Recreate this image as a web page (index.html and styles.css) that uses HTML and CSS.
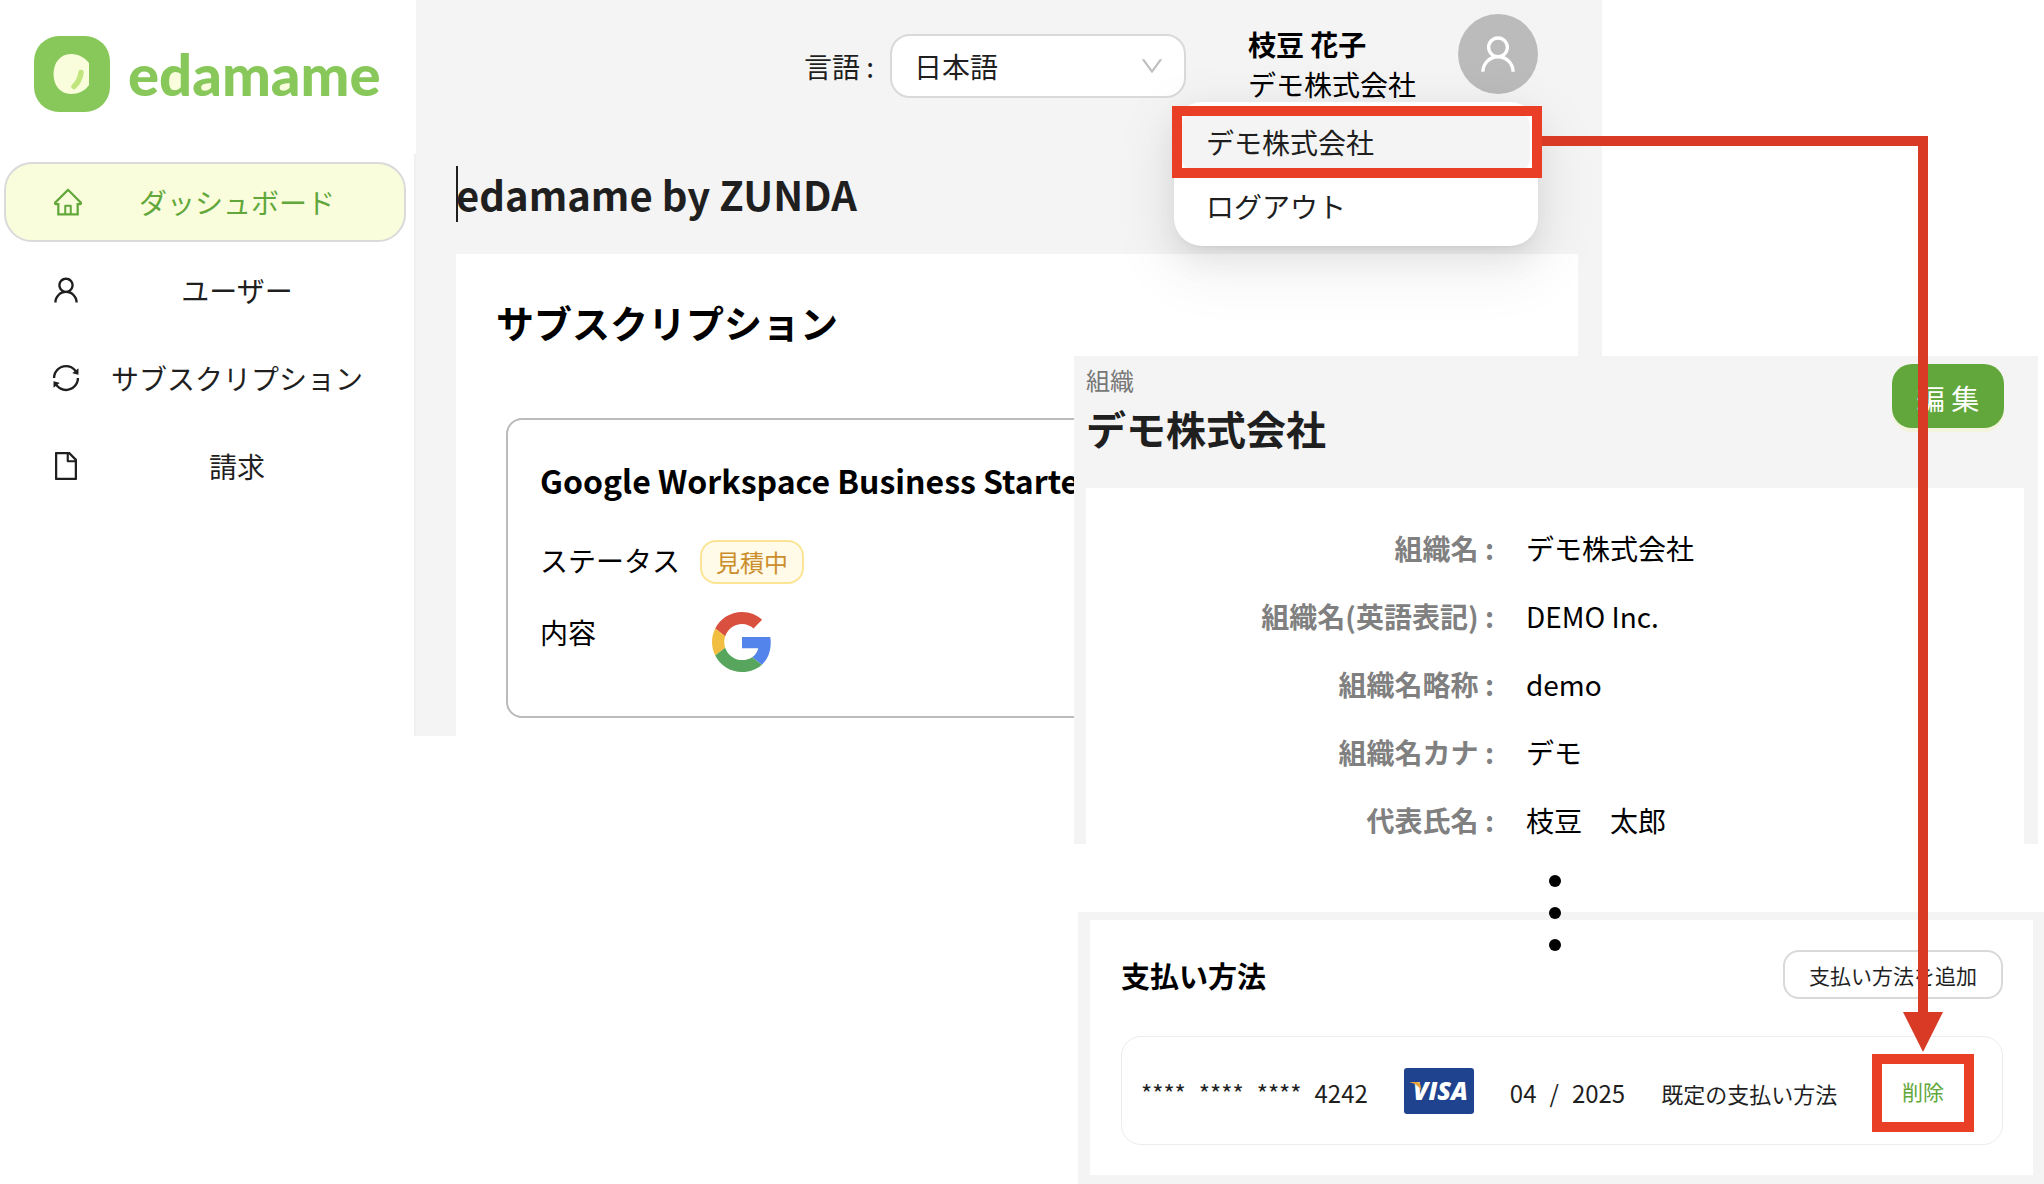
FILE: index.html
```html
<!DOCTYPE html>
<html lang="ja">

<head>
    <meta charset="UTF-8">
    <meta name="viewport" content="width=device-width, initial-scale=1.0">
    <title>edamame by ZUNDA</title>
    <link rel="stylesheet" href="styles.css">
</head>
<body>
    <div class="canvas">
        <!-- dashboard -->
        <div class="window dashboard">
            <aside class="sidebar">
                <a href="#" class="logo">
                    <svg class="logo-mark" viewBox="0 0 76 76" aria-hidden="true">
                        <rect width="76" height="76" rx="25" fill="#88c85b"/>
                        <path d="M37 18c-11 0-17.500 9-17.500 20S26 58 37 58c7 0 14-3 18-9V27c-4-5-10-9-18-9z" fill="#fafddc"/>
                        <path d="M47 36.500c-.8 6-3 10.500-7 14" fill="none" stroke="#bfe57c" stroke-width="5.500" stroke-linecap="round"/>
                    </svg>
                    <span class="logo-text">e<span class="bowl-d">d</span><span class="bowl-a">a</span>m<span class="bowl-a">a</span>me</span>
                </a>
                <nav class="nav">
                    <a href="#" class="nav-item active">
                        <svg class="icon" viewBox="64 64 896 896" aria-hidden="true"><path d="M946.5 505L560.1 118.8l-25.9-25.9a31.500 31.500 0 00-44.4 0L77.500 505a63.900 63.900 0 00-18.800 46c.4 35.200 29.700 63.300 64.900 63.300h42.500V940h691.800V614.300h43.400c17.100 0 33.200-6.700 45.300-18.800a63.600 63.600 0 0018.700-45.300c0-17-6.700-33.100-18.800-45.200zM568 868H456V664h112v204zm217.900-325.700V868H632V640c0-22.100-17.900-40-40-40H432c-22.100 0-40 17.900-40 40v228H238.100V542.300h-96l370-369.700 23.100 23.100L882 542.300h-96.100z"/></svg>
                        <span>ダッシュボード</span>
                    </a>
                    <a href="#" class="nav-item">
                        <svg class="icon" viewBox="64 64 896 896" aria-hidden="true"><path d="M858.5 763.6a374 374 0 00-80.6-119.5 375.63 375.63 0 00-119.5-80.6c-.4-.2-.8-.3-1.2-.5C719.5 518 760 444.7 760 362c0-137-111-248-248-248S264 225 264 362c0 82.7 40.5 156 102.8 201.1-.4.2-.8.3-1.2.5-44.8 18.9-85 46-119.5 80.6a375.63 375.63 0 00-80.6 119.5A371.7 371.7 0 00136 901.8a8 8 0 008 8.2h60c4.4 0 7.9-3.5 8-7.8 2-77.2 33-149.5 87.8-204.3 56.7-56.7 132-87.9 212.2-87.9s155.5 31.2 212.2 87.9C779 752.7 810 825 812 902.2c.1 4.4 3.6 7.8 8 7.8h60a8 8 0 008-8.2c-1-47.8-10.9-94.3-29.5-138.2zM512 534c-45.9 0-89.1-17.9-121.6-50.4S340 407.9 340 362c0-45.9 17.9-89.1 50.4-121.6S466.1 190 512 190s89.1 17.9 121.6 50.4S684 316.1 684 362c0 45.9-17.9 89.1-50.4 121.6S557.9 534 512 534z"/></svg>
                        <span>ユーザー</span>
                    </a>
                    <a href="#" class="nav-item">
                        <svg class="icon" viewBox="64 64 896 896" aria-hidden="true"><path d="M168 504.2c1-43.7 10-86.1 26.9-126 17.3-41 42.1-77.7 73.7-109.4S337 212.3 378 195c42.4-17.9 87.4-27 133.9-27s91.5 9.1 133.8 27A341.5 341.5 0 01755 268.8c9.9 9.9 19.2 20.4 27.8 31.4l-60.2 47a8 8 0 003 14.1l175.7 43c5 1.2 9.9-2.6 9.9-7.7l.8-180.9c0-6.7-7.7-10.5-12.9-6.3l-56.4 44.1C765.8 155.1 646.2 92 511.8 92 282.7 92 96.3 275.6 92 503.8a8 8 0 008 8.2h60c4.4 0 7.9-3.5 8-7.8zm756 7.8h-60c-4.4 0-7.9 3.5-8 7.8-1 43.7-10 86.1-26.9 126-17.3 41-42.1 77.8-73.7 109.4A342.45 342.45 0 01512.1 856a342.24 342.24 0 01-243.2-100.8c-9.9-9.9-19.2-20.4-27.8-31.4l60.2-47a8 8 0 00-3-14.1l-175.7-43c-5-1.2-9.9 2.6-9.9 7.7l-.7 181c0 6.7 7.7 10.5 12.9 6.3l56.4-44.1C258.2 868.9 377.8 932 512.2 932c229.2 0 415.5-183.7 419.8-411.8a8 8 0 00-8-8.2z"/></svg>
                        <span>サブスクリプション</span>
                    </a>
                    <a href="#" class="nav-item">
                        <svg class="icon" viewBox="64 64 896 896" aria-hidden="true"><path d="M854.6 288.6L639.4 73.4c-6-6-14.1-9.4-22.6-9.4H192c-17.7 0-32 14.3-32 32v832c0 17.7 14.3 32 32 32h640c17.7 0 32-14.3 32-32V311.3c0-8.5-3.4-16.7-9.4-22.7zM790.2 326H602V137.8L790.2 326zm1.8 562H232V136h302v216a42 42 0 0042 42h216v494z"/></svg>
                        <span>請求</span>
                    </a>
                </nav>
            </aside>
            <main class="main">
                <header class="header">
                    <div class="lang">
                        <label for="lang">言語 :</label>
                        <div class="select-wrap">
                            <select id="lang" class="select">
                                <option>日本語</option>
                                <option>English</option>
                            </select>
                            <svg class="select-arrow" viewBox="64 64 896 896" aria-hidden="true"><path d="M884 256h-75c-5.1 0-9.9 2.5-12.9 6.6L512 654.2 227.9 262.6c-3-4.1-7.8-6.6-12.9-6.6h-75c-6.5 0-10.3 7.4-6.5 12.7l352.6 486.1c12.8 17.6 39 17.6 51.7 0l352.6-486.1c3.9-5.3.1-12.7-6.4-12.7z"/></svg>
                        </div>
                    </div>
                    <div class="account">
                        <strong>枝豆 花子</strong>
                        <span>デモ株式会社</span>
                    </div>
                    <button type="button" class="avatar" aria-label="アカウント">
                        <svg viewBox="64 64 896 896" aria-hidden="true"><path d="M858.5 763.6a374 374 0 00-80.6-119.5 375.63 375.63 0 00-119.5-80.6c-.4-.2-.8-.3-1.2-.5C719.5 518 760 444.7 760 362c0-137-111-248-248-248S264 225 264 362c0 82.7 40.5 156 102.8 201.1-.4.2-.8.3-1.2.5-44.8 18.9-85 46-119.5 80.6a375.63 375.63 0 00-80.6 119.5A371.7 371.7 0 00136 901.8a8 8 0 008 8.2h60c4.4 0 7.9-3.5 8-7.8 2-77.2 33-149.5 87.8-204.3 56.7-56.7 132-87.9 212.2-87.9s155.5 31.2 212.2 87.9C779 752.7 810 825 812 902.2c.1 4.4 3.6 7.8 8 7.8h60a8 8 0 008-8.2c-1-47.8-10.9-94.3-29.5-138.2zM512 534c-45.9 0-89.1-17.9-121.6-50.4S340 407.9 340 362c0-45.9 17.9-89.1 50.4-121.6S466.1 190 512 190s89.1 17.9 121.6 50.4S684 316.1 684 362c0 45.9-17.9 89.1-50.4 121.6S557.9 534 512 534z"/></svg>
                    </button>
                    <div class="menu">
                        <a href="#" class="menu-item hover">デモ株式会社</a>
                        <a href="#" class="menu-item">ログアウト</a>
                        <span class="menu-mark"></span>
                    </div>
                </header>
                <h1>edamame by ZUNDA</h1>
                <section class="panel">
                    <h2>サブスクリプション</h2>
                    <article class="plan">
                        <h3>Google Workspace Business Starter</h3>
                        <dl class="plan-info">
                            <dt>ステータス</dt>
                            <dd><span class="tag">見積中</span></dd>
                            <dt>内容</dt>
                            <dd>
                                <svg class="google" viewBox="0 0 48 48" role="img" aria-label="Google">
                                    <path fill="#d9503f" d="M24 9.5c3.54 0 6.71 1.22 9.21 3.6l6.85-6.85C35.9 2.38 30.47 0 24 0 14.62 0 6.51 5.38 2.56 13.22l7.98 6.19C12.43 13.72 17.74 9.5 24 9.5z"/>
                                    <path fill="#5384ec" d="M46.98 24.55c0-1.57-.15-3.09-.38-4.55H24v9.02h12.94c-.58 2.96-2.26 5.48-4.78 7.18l7.73 6c4.51-4.18 7.09-10.36 7.09-17.65z"/>
                                    <path fill="#f2be42" d="M10.53 28.59c-.48-1.45-.76-2.99-.76-4.59s.27-3.14.76-4.59l-7.98-6.19C.92 16.46 0 20.12 0 24c0 3.88.92 7.54 2.56 10.78l7.97-6.19z"/>
                                    <path fill="#58a55d" d="M24 48c6.48 0 11.93-2.13 15.89-5.81l-7.73-6c-2.15 1.45-4.92 2.3-8.16 2.3-6.26 0-11.57-4.22-13.47-9.91l-7.98 6.19C6.51 42.62 14.62 48 24 48z"/>
                                </svg>
                            </dd>
                        </dl>
                    </article>
                </section>
            </main>
        </div>

        <!-- organization -->
        <div class="window organization">
            <div class="org-header">
                <div>
                    <p class="org-kind">組織</p>
                    <h2>デモ株式会社</h2>
                </div>
                <button type="button" class="edit-button">編 集</button>
            </div>
            <dl class="org-info">
                <dt>組織名 :</dt>
                <dd>デモ株式会社</dd>
                <dt>組織名(英語表記) :</dt>
                <dd>DEMO Inc.</dd>
                <dt>組織名略称 :</dt>
                <dd>demo</dd>
                <dt>組織名カナ :</dt>
                <dd>デモ</dd>
                <dt>代表氏名 :</dt>
                <dd>枝豆　太郎</dd>
            </dl>
        </div>

        <!-- payment -->
        <div class="window payment">
            <div class="payment-panel">
                <div class="payment-header">
                    <h2>支払い方法</h2>
                    <button type="button" class="add-button">支払い方法を追加</button>
                </div>
                <div class="card-line">
                    <div class="card-number">
                        <span>****</span><span>****</span><span>****</span><span>4242</span>
                    </div>
                    <svg class="visa" viewBox="0 0 70 46" role="img" aria-label="VISA">
                        <rect width="70" height="46" rx="3" fill="#20438f"/>
                        <text x="9" y="32" class="visa-text">VISA</text>
                        <path d="M5 14h8c2 0 3 1 3.400 3l1.400 7c-2-5-6-8.500-12.800-10z" fill="#e8a33c"/>
                    </svg>
                    <div class="card-date"><span>04</span><span>/</span><span>2025</span></div>
                    <span class="card-note">既定の支払い方法</span>
                    <button type="button" class="delete-button">削除</button>
                </div>
            </div>
        </div>

        <div class="dots"><i></i><i></i><i></i></div>
        <div class="arrow"></div>
    </div>
</body>
</html>
```
FILE: styles.css
```css
* {
    box-sizing: border-box;
}

body {
    margin: 0;
    background-color: white;
    color: #1f1f1f;
    font-family: "Noto Sans CJK JP", "Noto Sans", sans-serif;
    font-size: 28px;
    line-height: 40px;
}

h1, h2, h3, p, dl, dd {
    margin: 0;
}

a {
    color: inherit;
    text-decoration: none;
}

button, select {
    font-family: inherit;
    color: inherit;
    cursor: pointer;
}

.canvas {
    position: relative;
    min-width: 1900px;
    min-height: 1184px;
}

.window {
    background-color: #f4f4f4;
}

/* dashboard */
.dashboard {
    display: flex;
    width: 1602px;
    overflow: hidden;
}

.sidebar {
    display: flex;
    flex-direction: column;
    width: 416px;
    background-color: white;
}

.logo {
    display: flex;
    align-items: center;
    gap: 18px;
    padding: 36px 0 42px 34px;
}

.logo-mark {
    width: 76px;
    height: 76px;
}

.logo-text {
    color: #88c85b;
    font-family: Lato, sans-serif;
    font-size: 58px;
    font-weight: 900;
    line-height: 76px;
}

/* cream filling inside the letters */
.bowl-d {
    background: radial-gradient(8px 10px at 15px 42px, #fafddc 95%, transparent);
}

.bowl-a {
    background: radial-gradient(7px 6px at 14px 48px, #fafddc 95%, transparent);
}

.nav {
    display: flex;
    flex: 1;
    flex-direction: column;
    gap: 8px;
    padding: 8px 8px 0 4px;
    border-right: 2px solid #f0f0f0;
}

.nav-item {
    display: flex;
    align-items: center;
    gap: 4px;
    height: 80px;
    padding: 0 14px 0 46px;
    border: 2px solid transparent;
    border-radius: 28px;
}

.nav-item span {
    flex: 1;
    text-align: center;
}

.nav-item.active {
    padding: 0 16px 0 48px;
    background-color: #fafddc;
    border-color: #dadada;
    color: #62a73b;
}

.icon {
    width: 28px;
    height: 28px;
    fill: currentColor;
}

.main {
    flex: 1;
    padding: 0 24px 0 40px;
}

.header {
    position: relative;
    display: flex;
    align-items: flex-start;
    justify-content: flex-end;
    padding: 14px 40px 62px 0;
}

.lang {
    display: flex;
    align-items: center;
    gap: 16px;
    margin-top: 20px;
}

.select-wrap {
    position: relative;
}

.select {
    display: block;
    appearance: none;
    width: 296px;
    height: 64px;
    padding: 0 22px;
    border: 2px solid #d9d9d9;
    border-radius: 20px;
    background-color: white;
    font-size: 28px;
}

.select-arrow {
    position: absolute;
    top: 20px;
    right: 22px;
    width: 24px;
    height: 24px;
    fill: #bfbfbf;
    pointer-events: none;
}

.account {
    display: flex;
    flex-direction: column;
    margin: 0 42px 0 62px;
    padding-top: 10px;
    color: black;
}

.avatar {
    display: flex;
    align-items: center;
    justify-content: center;
    width: 80px;
    height: 80px;
    padding: 0;
    border: none;
    border-radius: 50%;
    background-color: #bbb;
}

.avatar svg {
    width: 40px;
    height: 40px;
    fill: white;
}

.menu {
    position: absolute;
    top: 102px;
    right: 40px;
    width: 364px;
    padding: 8px;
    border-radius: 28px;
    background-color: white;
    box-shadow: 0 12px 32px rgba(0, 0, 0, 0.08), 0 6px 12px -8px rgba(0, 0, 0, 0.12), 0 18px 56px 16px rgba(0, 0, 0, 0.05);
}

.menu-item {
    display: block;
    padding: 12px 24px;
    border-radius: 16px;
}

.menu-item.hover {
    background-color: #f4f4f4;
}

.menu-mark {
    position: absolute;
    top: 4px;
    right: -4px;
    left: -2px;
    height: 72px;
    border: 10px solid #ea3f27;
}

h1 {
    box-shadow: inset 2px 0 0 #1f1f1f;
    font-size: 40px;
    line-height: 56px;
}

.panel {
    margin-top: 32px;
    padding: 40px 24px 18px 40px;
    background-color: white;
    color: black;
}

.panel h2 {
    font-size: 38px;
    line-height: 56px;
}

.plan {
    margin: 68px 0 0 10px;
    padding: 36px 32px 44px;
    border: 2px solid #bbb;
    border-radius: 16px;
}

.plan h3 {
    font-size: 32px;
    line-height: 48px;
}

.plan-info {
    display: grid;
    grid-template-columns: 160px 1fr;
    row-gap: 28px;
    margin-top: 36px;
}

.tag {
    display: block;
    width: max-content;
    padding: 0 14px;
    border: 2px solid #fbe594;
    border-radius: 16px;
    background-color: #fffbe8;
    color: #cb8e2d;
    font-size: 24px;
}

.google {
    display: block;
    width: 60px;
    height: 60px;
    margin-left: 12px;
}

/* organization */
.organization {
    position: absolute;
    top: 356px;
    right: 6px;
    left: 1074px;
    padding: 8px 14px 0 12px;
}

.org-header {
    display: flex;
    align-items: flex-start;
    justify-content: space-between;
    padding: 0 20px 32px 0;
}

.org-kind {
    margin-bottom: 4px;
    color: #777;
    font-size: 24px;
    line-height: 32px;
}

.org-header h2 {
    font-size: 40px;
    line-height: 56px;
}

.edit-button {
    width: 112px;
    height: 64px;
    padding: 4px 0 0;
    border: none;
    border-radius: 20px;
    background-color: #62a73b;
    box-shadow: 0 4px 0 #f2f5dc;
    color: white;
    font-size: 28px;
}

.org-info {
    display: grid;
    grid-template-columns: 408px 1fr;
    gap: 24px 32px;
    padding: 38px 0 2px;
    background-color: white;
    line-height: 44px;
}

.org-info dt {
    color: #808080;
    font-weight: bold;
    text-align: right;
}

.org-info dd {
    color: black;
}

/* payment */
.payment {
    position: absolute;
    top: 912px;
    right: 0;
    left: 1078px;
    padding: 8px 11px 9px 12px;
}

.payment-panel {
    padding: 30px 30px 30px 31px;
    background-color: white;
}

.payment-header {
    display: flex;
    align-items: center;
    justify-content: space-between;
}

.payment-header h2 {
    color: black;
    font-size: 29px;
}

.add-button {
    height: 49px;
    padding: 0 24px;
    border: 2px solid #d9d9d9;
    border-radius: 16px;
    background-color: white;
    font-size: 21px;
}

.card-line {
    display: flex;
    align-items: center;
    height: 109px;
    margin-top: 37px;
    padding: 4px 28px 0 19px;
    border: 1px solid #ececec;
    border-radius: 20px;
    font-size: 22px;
    white-space: nowrap;
}

.card-number, .card-date {
    display: flex;
    gap: 13px;
    margin-right: 36px;
    font-size: 24px;
}

.visa {
    width: 70px;
    height: 46px;
    margin: 0 36px 4px 0;
}

.visa-text {
    fill: white;
    font-family: "Open Sans", sans-serif;
    font-size: 25px;
    font-style: italic;
    font-weight: 800;
}

.delete-button {
    width: 102px;
    height: 78px;
    margin-left: auto;
    padding: 0 0 4px;
    border: 10px solid #ea3f27;
    background-color: white;
    color: #62a73b;
    font-size: 21px;
}

/* annotations */
.dots {
    position: absolute;
    top: 875px;
    left: 1549px;
    display: flex;
    flex-direction: column;
    gap: 20px;
}

.dots i {
    width: 12px;
    height: 12px;
    border-radius: 50%;
    background-color: black;
}

.arrow {
    position: absolute;
    top: 136px;
    right: 116px;
    left: 1542px;
    height: 878px;
    border: solid #d93a26;
    border-width: 10px 10px 0 0;
    pointer-events: none;
}

.arrow::after {
    content: "";
    position: absolute;
    right: -25px;
    bottom: -38px;
    border: 20px solid transparent;
    border-top: 40px solid #d93a26;
    border-bottom: none;
}
```
